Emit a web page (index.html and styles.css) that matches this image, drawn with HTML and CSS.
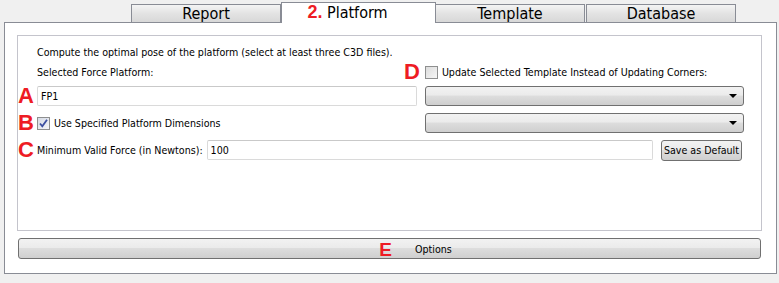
FILE: index.html
```html
<!DOCTYPE html>
<html lang="en">
<head>
  <meta charset="UTF-8">
  <title>Platform</title>
  <link rel="stylesheet" href="styles.css">
</head>
<body>
  <div class="tabs">
    <div class="tab">Report</div>
    <div class="tab active"><span class="mark">2.</span> Platform</div>
    <div class="tab">Template</div>
    <div class="tab">Database</div>
  </div>
  <div class="pane">
    <div class="group">
      <div class="desc">Compute the optimal pose of the platform (select at least three C3D files).</div>

      <div class="label-cell">Selected Force Platform:</div>
      <div class="check-cell right">
        <span class="mark letter-d">D</span>
        <span class="check"></span>
        <span>Update Selected Template Instead of Updating Corners:</span>
      </div>

      <div class="mark letter">A</div>
      <div class="input">FP1</div>
      <div class="combo right"><span class="arrow"></span></div>

      <div class="mark letter">B</div>
      <div class="check-cell">
        <span class="check checked">
          <svg width="11" height="11" viewBox="0 0 11 11"><path d="M2 5.5 L4.3 8.3 L9 1.8" fill="none" stroke="#3c4fa0" stroke-width="1.8"/></svg>
        </span>
        <span>Use Specified Platform Dimensions</span>
      </div>
      <div class="combo right"><span class="arrow"></span></div>

      <div class="mark letter">C</div>
      <div class="force-row">
        <span class="force-label">Minimum Valid Force (in Newtons):</span>
        <div class="input grow">100</div>
        <button class="btn">Save as Default</button>
      </div>
    </div>
    <button class="options"><span class="mark letter-e">E</span>Options</button>
  </div>
</body>
</html>
```

FILE: styles.css
```css
body {
  margin: 0;
  background-color: #f0f0f0;
  font-family: "DejaVu Sans Condensed", "Liberation Sans", sans-serif;
  font-size: 10.6px;
  color: #000000;
  width: 779px;
  height: 283px;
}
.tabs {
  display: flex;
  align-items: flex-end;
  height: 22px;
  padding-left: 131px;
}
.tab {
  box-sizing: border-box;
  width: 150px;
  height: 18px;
  margin-right: 1px;
  border: 1px solid #898c95;
  border-bottom: none;
  background: linear-gradient(#f4f4f4, #e3e3e3 50%, #d8d8d8);
  font-size: 16px;
  line-height: 17px;
  text-align: center;
}
.tab.active {
  width: 155px;
  height: 21px;
  margin: 0 0 -1px -1px;
  padding-right: 22px;
  background: #ffffff;
  line-height: 19px;
}
.tab.active + .tab {
  margin-left: -1px;
}
.mark {
  color: #ee1c24;
  font-family: "Liberation Sans", sans-serif;
  font-weight: bold;
}
.tab .mark {
  font-size: 18px;
}
.pane {
  box-sizing: border-box;
  margin-left: 4px;
  width: 773px;
  height: 252px;
  border: 1px solid #898c95;
  background: #ffffff;
  padding: 12px 0 0 12px;
}
.group {
  box-sizing: border-box;
  width: 745px;
  height: 196px;
  border: 1px solid #c4c4cc;
  display: grid;
  grid-template-columns: 19px 380px 8px 319px;
  grid-template-rows: 14px 14px 20px 20px 20px;
  row-gap: 7px;
  padding-top: 8px;
  align-items: center;
}
.desc {
  grid-column: 2 / 5;
  padding-top: 1px;
}
.label-cell {
  grid-column: 2;
}
.right {
  grid-column: 4;
}
.check-cell {
  display: flex;
  align-items: center;
  gap: 4px;
}
.letter {
  font-size: 22px;
  line-height: 20px;
  text-align: right;
  padding-right: 3px;
}
.letter-d {
  font-size: 22px;
  line-height: 14px;
  margin-left: -21px;
  margin-right: 1px;
}
.check {
  box-sizing: border-box;
  width: 13px;
  height: 13px;
  border: 1px solid #8e8f8f;
  background: linear-gradient(135deg, #dcdcdc, #f6f6f6);
  display: flex;
  align-items: center;
  justify-content: center;
}
.check.checked {
  background: linear-gradient(135deg, #d6dbe6, #f4f5f8);
}
.input {
  box-sizing: border-box;
  height: 20px;
  border: 1px solid #dadada;
  border-top-color: #c9c9c9;
  border-radius: 2px;
  padding: 0 3px;
  line-height: 18px;
  background: #ffffff;
}
.combo {
  box-sizing: border-box;
  height: 20px;
  border: 1px solid #707070;
  border-radius: 3px;
  background: linear-gradient(#f2f2f2, #ebebeb 45%, #dddddd 50%, #cfcfcf);
  position: relative;
}
.arrow {
  position: absolute;
  right: 6px;
  top: 7px;
  border-left: 4px solid transparent;
  border-right: 4px solid transparent;
  border-top: 4px solid #000000;
}
.force-row {
  grid-column: 2 / 5;
  display: flex;
  align-items: center;
  gap: 8px;
  padding-right: 2px;
}
.force-label {
  margin-right: -4px;
}
.grow {
  flex: 1;
}
.btn {
  height: 21px;
  padding: 0 2px;
  border: 1px solid #707070;
  border-radius: 3px;
  background: linear-gradient(#f2f2f2, #ebebeb 45%, #dddddd 50%, #cfcfcf);
  font: inherit;
  color: #000000;
}
.options {
  display: block;
  box-sizing: border-box;
  width: 743px;
  height: 21px;
  margin: 7px 0 0 1px;
  border: 1px solid #707070;
  border-radius: 3px;
  background: linear-gradient(#f2f2f2, #ebebeb 45%, #dddddd 50%, #cfcfcf);
  font: inherit;
  color: #000000;
  padding: 0 0 0 52px;
}
.letter-e {
  font-size: 19px;
  margin-right: 23px;
  vertical-align: -3px;
}
```
